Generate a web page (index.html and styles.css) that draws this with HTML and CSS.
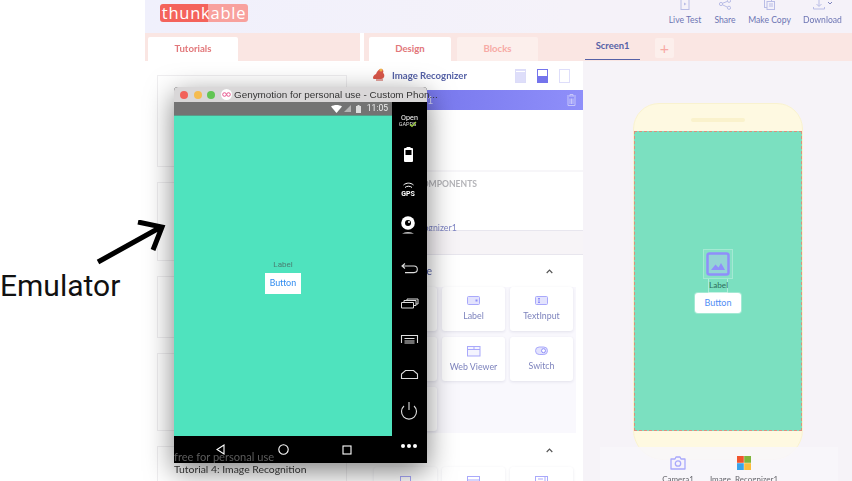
FILE: index.html
```html
<!DOCTYPE html>
<html lang="en">
<head>
<meta charset="utf-8">
<title>Thunkable with emulator</title>
<link rel="stylesheet" href="styles.css">
</head>
<body>
<div class="page">
  <div class="gutter"></div>
  <div class="app">
    <header class="topbar">
      <div class="logo">thunkable</div>
      <nav class="actions">
        <div class="action act-live">
          <svg width="10" height="11" viewBox="0 0 10 11"><rect x="1" y="0" width="8" height="10.5" fill="none" stroke="#b9bde6"/><path d="M4 3.5l2.5 1.5-2.5 1.5z" fill="#b9bde6"/></svg>
          <span>Live Test</span>
        </div>
        <div class="action act-share">
          <svg width="12" height="11" viewBox="0 0 12 11"><g fill="none" stroke="#b9bde6"><circle cx="2" cy="5" r="1.6"/><circle cx="10" cy="1.8" r="1.6"/><circle cx="10" cy="8.8" r="1.6"/><path d="M3.5 4.3l5-2M3.5 5.8l5 2.4"/></g></svg>
          <span>Share</span>
        </div>
        <div class="action act-copy">
          <svg width="11" height="11" viewBox="0 0 11 11"><g fill="none" stroke="#b9bde6"><rect x="0.5" y="0.5" width="7" height="8"/><rect x="3" y="2.5" width="7.5" height="8" fill="#f3f1fa"/><path d="M5 5h4M5 7h4"/></g></svg>
          <span>Make Copy</span>
        </div>
        <div class="action act-down">
          <svg width="20" height="11" viewBox="0 0 20 11"><g fill="none" stroke="#b9bde6"><path d="M6 0v7M3.500 5L6 7.500 8.500 5M0.500 8v2h11V8"/></g><path d="M15 3l2 2 2-2" fill="none" stroke="#7d83bd"/></svg>
          <span>Download</span>
        </div>
      </nav>
    </header>

    <div class="workspace">
      <section class="panel panel-left">
        <div class="tabs">
          <div class="tab tab-active tab-tutorials">Tutorials</div>
        </div>
        <div class="tutorials">
          <article class="tutorial h1"></article>
          <article class="tutorial h2"></article>
          <article class="tutorial h3"></article>
          <article class="tutorial h4"></article>
          <article class="tutorial h5">Tutorial 4: Image Recognition</article>
        </div>
      </section>

      <section class="panel panel-mid">
        <div class="tabs">
          <div class="tab tab-active tab-design">Design</div>
          <div class="tab tab-blocks">Blocks</div>
        </div>
        <div class="proj">
          <svg class="proj-icon" width="15" height="15" viewBox="0 0 15 15"><path d="M1 11c0-2 1-3 3-4 1-3 3-5 5-5 2 0 3 2 2 4 2 1 2 6-2 6H4c-2 0-3 0-3-1z" fill="#d9574a"/><circle cx="9" cy="3" r="1.600" fill="#f0b44c"/><path d="M4 13h7" stroke="#c9473c"/></svg>
          <span class="proj-name">Image Recognizer</span>
          <div class="layouts">
            <span class="layout l1"></span>
            <span class="layout l2"></span>
            <span class="layout l3"></span>
          </div>
        </div>
        <div class="screen-row">
          <span>Screen1</span>
          <svg width="9" height="12" viewBox="0 0 9 12"><path d="M0 2h9M3 2V0.500h3V2M1 3v8.500h7V3M3 4.500v5.500M4.500 4.500v5.500M6 4.500v5.500" fill="none" stroke="#c6c6fb"/></svg>
        </div>
        <div class="tree"></div>
        <div class="invisible">
          <div class="invisible-title">INVISIBLE COMPONENTS</div>
          <div class="invisible-item">Image Recognizer1</div>
        </div>
        <div class="band"></div>
        <div class="group-head"><span>User Interface</span><svg width="7" height="5" viewBox="0 0 7 5"><path d="M0.700 4L3.500 1.200 6.300 4" fill="none" stroke="#555" stroke-width="1.200"/></svg></div>
        <div class="palette">
          <div class="comp"><span>Button</span></div>
          <div class="comp"><svg width="13" height="10" viewBox="0 0 13 10"><rect x="0.500" y="0.500" width="12" height="8" rx="1" fill="#e3e3fd" stroke="#a9a9fb"/><rect x="8.500" y="3.500" width="2" height="2" fill="#8f8ffa"/></svg><span>Label</span></div>
          <div class="comp"><svg width="13" height="10" viewBox="0 0 13 10"><rect x="0.500" y="0.500" width="12" height="8" rx="1" fill="#e3e3fd" stroke="#a9a9fb"/><path d="M3 2.500h2M4 2.500v4M3 6.500h2" stroke="#8f8ffa" fill="none"/></svg><span>TextInput</span></div>
          <div class="comp"><span>Image</span></div>
          <div class="comp"><svg width="14" height="11" viewBox="0 0 14 11"><rect x="0.500" y="0.500" width="12.500" height="9.500" fill="#f4f4fe" stroke="#a9a9fb"/><path d="M0.500 3.500h12.500M7 0.500v3" stroke="#a9a9fb" fill="none"/></svg><span>Web Viewer</span></div>
          <div class="comp"><svg width="13" height="10" viewBox="0 0 13 10"><rect x="0.500" y="1" width="12" height="7.500" rx="3.700" fill="#e3e3fd" stroke="#a9a9fb"/><circle cx="8.500" cy="4.700" r="2" fill="#fff" stroke="#8f8ffa"/></svg><span>Switch</span></div>
          <div class="comp"><span>Slider</span></div>
        </div>
        <div class="group-head group-second"><span>Layout</span><svg width="7" height="5" viewBox="0 0 7 5"><path d="M0.700 4L3.500 1.200 6.300 4" fill="none" stroke="#555" stroke-width="1.200"/></svg></div>
        <div class="palette palette-plain">
          <div class="comp"><svg width="11" height="11" viewBox="0 0 11 11"><rect x="0.500" y="0.500" width="10" height="10" fill="none" stroke="#a9a9fb"/></svg></div>
          <div class="comp"><svg width="13" height="11" viewBox="0 0 13 11"><rect x="0.500" y="0.500" width="12" height="10" fill="none" stroke="#a9a9fb"/><path d="M0.500 4h12" stroke="#a9a9fb"/></svg></div>
          <div class="comp"><svg width="13" height="11" viewBox="0 0 13 11"><rect x="0.500" y="0.500" width="12" height="10" fill="none" stroke="#a9a9fb"/><path d="M3 3h5M3 6h5M10 1v9" stroke="#a9a9fb"/></svg></div>
        </div>
      </section>

      <section class="panel panel-right">
        <div class="tabs tabs-screens">
          <div class="screen-tab">Screen1</div>
          <div class="add-screen">+</div>
        </div>
        <div class="stage">
          <div class="phone">
            <div class="phone-top"><span class="speaker"></span></div>
            <div class="phone-screen">
              <div class="widget-image">
                <svg width="24" height="24" viewBox="0 0 24 24"><rect x="1.500" y="1.500" width="21" height="21" rx="2" fill="#a7c3e8" fill-opacity=".45" stroke="#8f8ffa" stroke-width="2.500"/><path d="M5 18l4.500-5.500 3 3 2.500-4.500 4 7z" fill="#8f8ffa"/></svg>
              </div>
              <div class="widget-label">Label</div>
              <div class="widget-button">Button</div>
            </div>
          </div>
          <div class="tray">
            <div class="tray-item tray-cam">
              <svg width="16" height="14" viewBox="0 0 16 14"><path d="M1 3h4l1-2h4l1 2h4v10H1z" fill="#f6f3fb" stroke="#a9a9fb" stroke-width="1.300" stroke-linejoin="round"/><circle cx="8" cy="7.500" r="2.700" fill="none" stroke="#a9a9fb" stroke-width="1.300"/></svg>
              <span>Camera1</span>
            </div>
            <div class="tray-item tray-rec">
              <svg width="14" height="14" viewBox="0 0 14 14"><rect width="6.800" height="6.800" fill="#f0552d"/><rect x="7.200" width="6.800" height="6.800" fill="#7fb53a"/><rect y="7.200" width="6.800" height="6.800" fill="#3aa3ea"/><rect x="7.200" y="7.200" width="6.800" height="6.800" fill="#fbbc3c"/></svg>
              <span>Image&nbsp; Recognizer1</span>
            </div>
          </div>
        </div>
      </section>
    </div>
  </div>
</div>

<div class="annotation">Emulator</div>
<svg class="arrow" width="80" height="50" viewBox="0 0 80 50"><path d="M2 42L65 7M42 2L66 7 57 30" fill="none" stroke="#000" stroke-width="5"/></svg>

<div class="emu">
  <div class="emu-title">
    <span class="light red"></span><span class="light yellow"></span><span class="light green"></span>
    <svg class="emu-logo" width="11" height="11" viewBox="0 0 11 11"><circle cx="5.500" cy="5.500" r="5.500" fill="#fff"/><g fill="none" stroke="#e9578f" stroke-width="1"><circle cx="3.500" cy="5.500" r="1.800"/><circle cx="7.500" cy="5.500" r="1.800"/></g></svg>
    <span class="emu-name">Genymotion for personal use - Custom Phon...</span>
  </div>
  <div class="emu-body">
    <div class="emu-main">
      <div class="emu-status">
        <svg width="11" height="8" viewBox="0 0 11 8"><path d="M0 1.500C3-.5 8-.5 11 1.500L5.500 8z" fill="#fff"/></svg>
        <svg width="7" height="7" viewBox="0 0 7 7"><path d="M7 0v7H0z" fill="#b4b4b4"/></svg>
        <svg class="st-batt" width="5" height="8" viewBox="0 0 5 8"><path d="M1.500 0h2v1H5v7H0V1h1.500z" fill="#ddd"/></svg>
        <span class="emu-time">11:05</span>
      </div>
      <div class="emu-screen">
        <div class="emu-label">Label</div>
        <div class="emu-button">Button</div>
      </div>
      <div class="emu-nav">
        <svg width="9" height="11" viewBox="0 0 9 11"><path d="M8 1v9L1 5.500z" fill="none" stroke="#fff" stroke-width="1.100"/></svg>
        <svg width="11" height="11" viewBox="0 0 11 11"><circle cx="5.500" cy="5.500" r="4.700" fill="none" stroke="#fff" stroke-width="1.100"/></svg>
        <svg width="10" height="10" viewBox="0 0 10 10"><rect x="1" y="1" width="8" height="8" fill="none" stroke="#fff" stroke-width="1.100"/></svg>
      </div>
    </div>
    <svg class="emu-side" width="35" height="361" viewBox="0 0 35 361">
      <text class="side-open" x="17.500" y="18" text-anchor="middle">Open</text>
      <text class="side-gapps" x="15.500" y="24" text-anchor="middle">GAPPS</text>
      <path d="M18 22.500l2 2 4-4.500" fill="none" stroke="#9fd13f" stroke-width="1.200"/>
      <path d="M13 46h1.500v-1h4v1H20a1 1 0 0 1 1 1v12a1 1 0 0 1-1 1h-7a1 1 0 0 1-1-1V47a1 1 0 0 1 1-1z" fill="#fff"/>
      <rect x="13.500" y="48" width="6" height="5" fill="#000"/>
      <path d="M11.500 83c3-2.500 7-2.500 10 0M13 85.500c2-1.700 5-1.700 7 0" fill="none" stroke="#fff" stroke-width="1"/>
      <text class="side-gps" x="16" y="93.500" text-anchor="middle">GPS</text>
      <circle cx="16" cy="121" r="6.800" fill="#fff"/>
      <circle cx="16" cy="121" r="3" fill="#000"/>
      <circle cx="17" cy="120" r="1" fill="#fff"/>
      <path d="M10 131.500c4-1.800 8-1.800 12 0z" fill="#fff"/>
      <path d="M10 164H22a3.300 3.300 0 0 1 0 6.600H13M13 161.500L10 164l3 2.500" fill="none" stroke="#ddd" stroke-width="1.100"/>
      <path d="M9.500 200.500h12v5.500h-12zM12 200.500v-2h12v5h-2.500M15 198.500v-1.500h11v5h-2" fill="none" stroke="#ddd" stroke-width="1"/>
      <path d="M9.500 241v-7.500h16v7.500M12.500 236.500h10M12.500 239h10M12.500 241h10" fill="none" stroke="#ddd" stroke-width="1.100"/>
      <path d="M9.500 276.500v-4.500l4-3.500h8l4 3.500v4.500z" fill="none" stroke="#ddd" stroke-width="1.100"/>
      <path d="M12 304a7.500 7.500 0 1 0 10 0M17 300v8" fill="none" stroke="#ddd" stroke-width="1.100"/>
      <circle cx="11" cy="344" r="2" fill="#fff"/><circle cx="17" cy="344" r="2" fill="#fff"/><circle cx="23" cy="344" r="2" fill="#fff"/>
    </svg>
  </div>
  <div class="emu-watermark">free for personal use</div>
</div>
</body>
</html>
```

FILE: styles.css
```css
* { box-sizing: border-box; }
html, body { margin: 0; padding: 0; }
body {
  width: 852px;
  height: 481px;
  overflow: hidden;
  position: relative;
  background: #fff;
  font-family: "Lato", "Open Sans", sans-serif;
}
.page { display: flex; width: 852px; height: 481px; }
.gutter { width: 145px; flex: none; background: #fff; }
.app { flex: 1; min-width: 0; display: flex; flex-direction: column; filter: blur(.3px); }

.topbar {
  height: 33px;
  flex: none;
  display: flex;
  justify-content: space-between;
  background: linear-gradient(90deg, #f0f0fc, #f5f2f9 60%);
  padding: 4px 0 0 15px;
}
.logo {
  width: 88px;
  height: 18px;
  border-radius: 3px;
  background: linear-gradient(90deg, #f4635b 0 54%, #f8a19d 54%);
  color: #fff;
  font-family: "Open Sans", sans-serif;
  font-size: 16.500px;
  line-height: 18px;
  letter-spacing: .75px;
  text-align: center;
}
.actions { display: flex; margin-top: -4px; }
.action {
  display: flex;
  flex-direction: column;
  align-items: center;
  font-size: 8.600px;
  line-height: 12px;
  color: #6d75b4;
  white-space: nowrap;
  height: 33px;
}
.action span { margin-top: 4px; }
.action svg { flex: none; margin-top: -1px; }
.act-live { width: 42px; }
.act-share { width: 38px; }
.act-copy { width: 51px; }
.act-down { width: 55px; margin-right: 2px; }

.workspace { flex: 1; min-height: 0; display: flex; }
.panel { display: flex; flex-direction: column; overflow: hidden; }
.panel-left { width: 215px; background: #fff; }
.panel-mid { width: 219px; margin-left: 4px; background: #fff; }
.panel-right { width: 269px; background: #f6f3f8; }

.tabs {
  height: 28px;
  flex: none;
  display: flex;
  align-items: flex-end;
  background: #fae6e3;
  gap: 6px;
}
.panel-left .tabs { padding-left: 3px; }
.panel-mid .tabs { padding-left: 5px; }
.tab {
  height: 24px;
  border-radius: 2px 2px 0 0;
  font-size: 9.600px;
  font-weight: 700;
  text-align: center;
  line-height: 24px;
}
.tab-active { background: #fff; color: #e2777a; }
.tab-tutorials { width: 90px; }
.tab-design { width: 82px; }
.tab-blocks { width: 81px; background: #fcefec; color: #f7aaa5; }

.tutorials { padding: 14px 13px 0 12px; display: flex; flex-direction: column; gap: 15px; }
.tutorial { border: 1px solid #efeef0; flex: none; width: 190px; }
.h1 { height: 92px; }
.h2 { height: 79px; }
.h3 { height: 62px; }
.h4 { height: 78px; }
.h5 { height: 60px; padding: 15px 0 0 16px; font-size: 10.400px; line-height: 14px; color: #3a3a3a; white-space: nowrap; }

.proj { height: 29px; flex: none; display: flex; align-items: center; padding: 0 13px 0 8px; }
.proj-icon { flex: none; margin-top: -2px; }
.proj-name { margin-left: 5px; font-size: 9.600px; font-weight: 700; color: #5561a6; white-space: nowrap; }
.layouts { margin-left: auto; display: flex; gap: 11px; }
.layout { width: 11px; height: 14px; border: 1px solid #dcdcf8; display: block; }
.l1 { background: linear-gradient(#dedefa 1.500px, #fff 1.500px, #fff 2.500px, #dedefa 2.500px); }
.l2 { background: linear-gradient(#fff 50%, #7474ec 50%); border-color: #7474ec; }
.l3 { background: #fff; border-color: #dedefa; }

.screen-row {
  height: 20px;
  flex: none;
  display: flex;
  align-items: center;
  justify-content: space-between;
  padding: 0 7px 0 32px;
  background: linear-gradient(90deg, #6f6fe8, #8f8ffa);
  color: #d7d7fb;
  font-size: 10.500px;
}
.tree { height: 62px; flex: none; border-bottom: 2px solid #f7f6f9; }
.invisible { height: 59px; flex: none; border-bottom: 1px solid #e8e6ee; padding: 6px 0 0 10px; }
.invisible-title { font-size: 8.600px; font-weight: 700; color: #b4b4b8; white-space: nowrap; line-height: 12px; }
.invisible-item { margin-top: 32px; font-size: 8.800px; color: #7f85c4; line-height: 11px; white-space: nowrap; margin-left: 10px; }
.band { height: 24px; flex: none; background: #f7f4f7; border-bottom: 1px solid #e8e6ee; }
.group-head {
  height: 32px;
  flex: none;
  display: flex;
  align-items: center;
  justify-content: space-between;
  padding: 0 30px 0 3px;
  color: #5561a6;
  font-size: 10.500px;
}
.group-second { height: 34px; }
.palette {
  width: 212px;
  flex: none;
  background: #f9f8fd;
  padding: 0 3px 2px 10px;
  display: grid;
  grid-template-columns: repeat(3, 63px);
  grid-auto-rows: 44px;
  column-gap: 5px;
  row-gap: 6px;
}
.palette-plain { background: #fff; }
.comp {
  background: #fff;
  border-radius: 3px;
  box-shadow: 0 1px 3px rgba(90, 90, 130, .14);
  display: flex;
  flex-direction: column;
  align-items: center;
  padding-top: 9px;
  font-size: 8.800px;
  color: #7d83bd;
  gap: 4px;
  line-height: 12px;
}
.comp svg { flex: none; }

.tabs-screens { gap: 15px; padding-left: 2px; align-items: stretch; }
.screen-tab {
  width: 55px;
  margin: 0 0 1px;
  text-align: center;
  color: #5561a6;
  font-size: 9.400px;
  font-weight: 700;
  line-height: 26px;
  border-bottom: 1.500px solid #5561a6;
}
.add-screen {
  width: 19px;
  height: 20px;
  margin-top: 5px;
  background: #fcefec;
  border-radius: 2px;
  text-align: center;
  color: #f7aaa5;
  font-size: 16px;
  line-height: 19px;
}
.stage { flex: 1; position: relative; min-height: 0; padding: 42px 0 0 50px; }
.phone {
  width: 170px;
  height: 357px;
  background: #fef9e1;
  border: 1px solid #f9f2cf;
  border-radius: 26px 26px 30px 30px;
  overflow: hidden;
}
.phone-top { height: 27px; display: flex; justify-content: center; padding-top: 14px; }
.speaker { width: 54px; height: 4px; border-radius: 2px; background: #faf2cc; display: block; }
.phone-screen {
  height: 300px;
  background: #7be0c0;
  border: 1px dashed #dc8f80;
  display: flex;
  flex-direction: column;
  align-items: center;
  padding-top: 117px;
}
.widget-image {
  width: 30px;
  height: 30px;
  flex: none;
  display: flex;
  align-items: center;
  justify-content: center;
  background: rgba(255, 255, 255, .09);
  border: 1px solid rgba(255, 255, 255, .25);
}
.widget-label {
  width: 20px;
  height: 14px;
  flex: none;
  border: 1px solid rgba(255, 255, 255, .4);
  border-top: 0;
  text-align: center;
  font-size: 8.200px;
  line-height: 13px;
  color: #2e6e5b;
}
.widget-button {
  width: 46px;
  height: 20px;
  flex: none;
  background: #fff;
  border-radius: 3px;
  box-shadow: 0 0 0 1px rgba(255, 255, 255, .3);
  text-align: center;
  color: #4f8df5;
  font-size: 9px;
  line-height: 20px;
}
.tray {
  position: absolute;
  left: 17px;
  top: 386px;
  width: 238px;
  height: 40px;
  background: rgba(248, 246, 250, .9);
  display: flex;
}
.tray-item {
  display: flex;
  flex-direction: column;
  align-items: center;
  font-size: 8px;
  line-height: 10px;
  color: #66666c;
  padding-top: 9px;
  gap: 4px;
  white-space: nowrap;
}
.tray-cam { width: 48px; margin-left: 54px; }
.tray-rec { width: 66px; margin-left: 9px; }

.annotation {
  position: absolute;
  left: 0;
  top: 268px;
  font-family: "Roboto", sans-serif;
  font-size: 30px;
  line-height: 35px;
  color: #111;
}
.arrow { position: absolute; left: 96px; top: 220px; }

.emu {
  position: absolute;
  left: 174px;
  top: 87px;
  width: 253px;
  height: 376px;
  border-radius: 4px 4px 2px 2px;
  display: flex;
  flex-direction: column;
  background: #000;
  box-shadow: 0 8px 28px rgba(0, 0, 0, .5);
  filter: blur(.25px);
}
.emu-title {
  height: 15px;
  flex: none;
  display: flex;
  align-items: center;
  padding-left: 6px;
  gap: 5.500px;
  background: #d9d7d8;
  border-radius: 4px 4px 0 0;
}
.light { width: 8px; height: 8px; border-radius: 50%; flex: none; display: block; }
.red { background: #f2625a; }
.yellow { background: #f5bc4f; }
.green { background: #62c554; }
.emu-logo { flex: none; }
.emu-name { margin-left: -3px; font-family: "Liberation Sans", sans-serif; font-size: 9.900px; color: #333; white-space: nowrap; }
.emu-body { flex: 1; min-height: 0; display: flex; }
.emu-main { width: 218px; flex: none; display: flex; flex-direction: column; }
.emu-status {
  height: 14px;
  flex: none;
  display: flex;
  align-items: center;
  justify-content: flex-end;
  gap: 2px;
  padding-right: 4px;
  background: #737373;
  border-bottom: 1px solid #5a9c8a;
}
.st-batt { margin-left: 3px; }
.emu-time { margin-left: 4px; font-family: "Roboto", sans-serif; font-size: 8.500px; color: #eee; line-height: 13px; }
.emu-screen {
  flex: 1;
  min-height: 0;
  background: #4fe3be;
  display: flex;
  flex-direction: column;
  align-items: center;
  justify-content: center;
  gap: 3px;
  padding-top: 1px;
}
.emu-label { font-family: "Roboto", sans-serif; font-size: 8px; line-height: 11px; color: #4a7f72; }
.emu-button {
  width: 36px;
  height: 21px;
  background: #fff;
  color: #2e8bf0;
  text-align: center;
  font-family: "Roboto", sans-serif;
  font-size: 9px;
  line-height: 21px;
}
.emu-nav {
  height: 27px;
  flex: none;
  background: #000;
  display: flex;
  align-items: center;
  padding-left: 42px;
  gap: 53px;
}
.emu-side { flex: none; display: block; background: #000; }
.side-open { font-family: "Roboto", sans-serif; font-size: 7.200px; fill: #fff; }
.side-gapps { font-family: "Roboto", sans-serif; font-size: 5.500px; fill: #ddd; }
.side-gps { font-family: "Roboto", sans-serif; font-size: 7px; font-weight: 700; fill: #fff; }
.emu-watermark {
  position: absolute;
  left: 0;
  top: 363px;
  font-size: 11.100px;
  line-height: 13px;
  color: #5c5c5c;
  white-space: nowrap;
}
```
